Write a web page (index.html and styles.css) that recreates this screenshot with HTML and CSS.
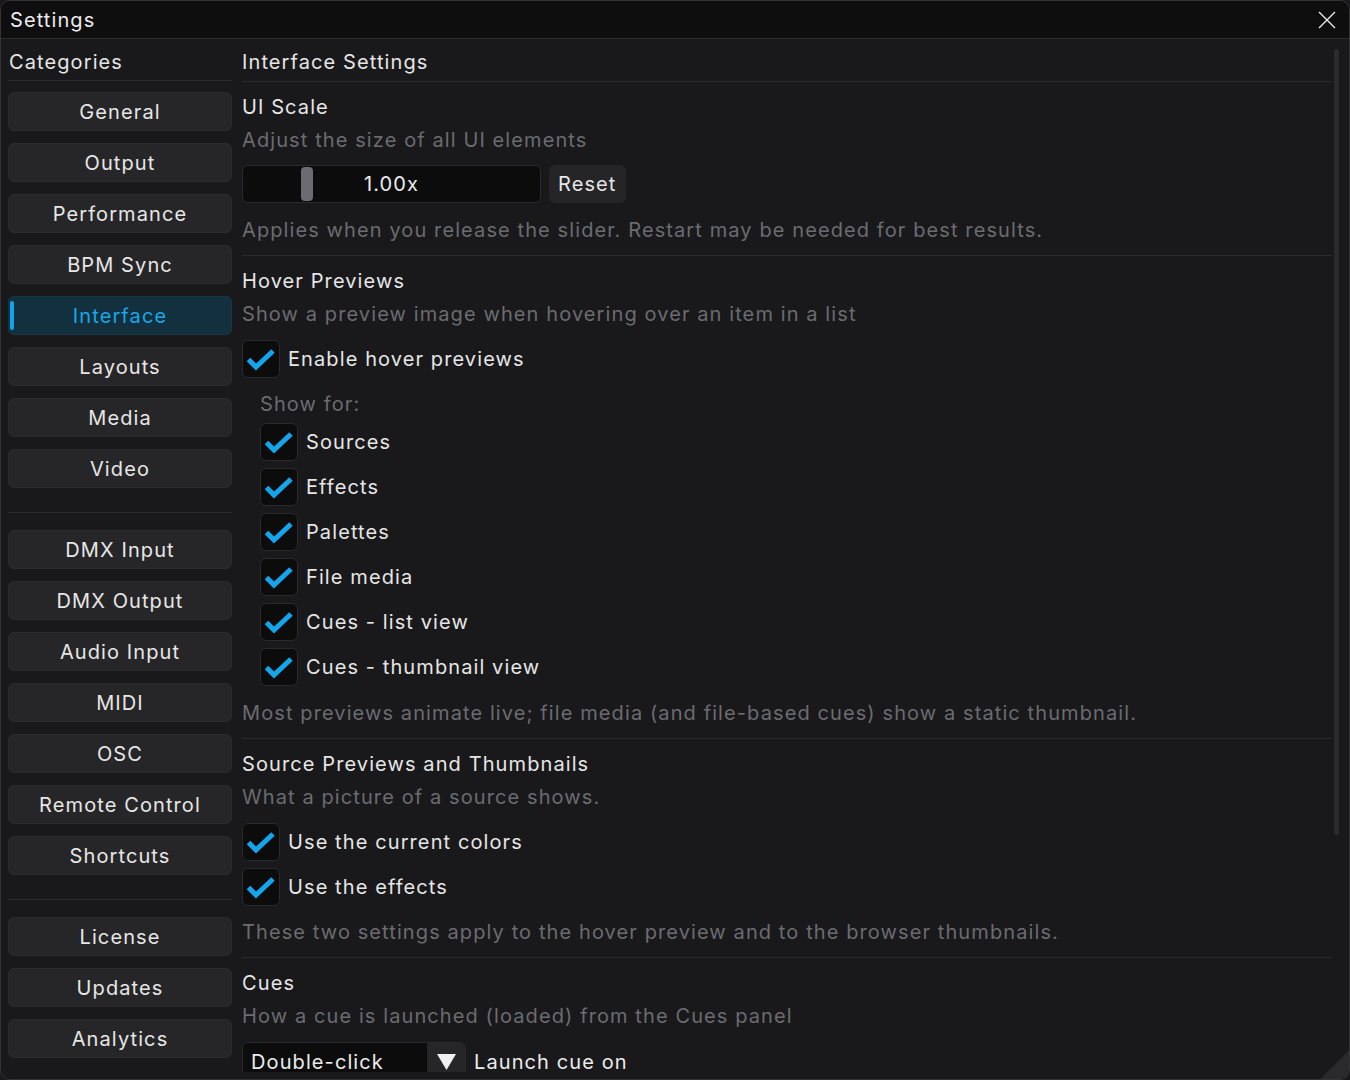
FILE: index.html
```html
<!DOCTYPE html>
<html lang="en">
<head>
    <meta charset="UTF-8">
    <title>Settings</title>
    <link rel="stylesheet" href="styles.css">
</head>
<body>
<div class="window">
    <div class="titlebar">
        <span class="title">Settings</span>
        <svg class="close" width="20" height="20" viewBox="0 0 20 20">
            <path d="M2 2 L18 18 M18 2 L2 18" stroke="#e8e8e8" stroke-width="1.4" fill="none"/>
        </svg>
    </div>
    <div class="main">
        <div class="sidebar">
            <div class="side-head">Categories</div>
            <div class="group">
                <div class="cat">General</div>
                <div class="cat">Output</div>
                <div class="cat">Performance</div>
                <div class="cat">BPM Sync</div>
                <div class="cat active">Interface</div>
                <div class="cat">Layouts</div>
                <div class="cat">Media</div>
                <div class="cat">Video</div>
            </div>
            <div class="group">
                <div class="cat">DMX Input</div>
                <div class="cat">DMX Output</div>
                <div class="cat">Audio Input</div>
                <div class="cat">MIDI</div>
                <div class="cat">OSC</div>
                <div class="cat">Remote Control</div>
                <div class="cat">Shortcuts</div>
            </div>
            <div class="group">
                <div class="cat">License</div>
                <div class="cat">Updates</div>
                <div class="cat">Analytics</div>
            </div>
        </div>

        <div class="content">
            <div class="scroll">
                <div class="page-head">Interface Settings</div>

                <div class="section">
                    <div class="heading">UI Scale</div>
                    <div class="desc">Adjust the size of all UI elements</div>
                    <div class="row slider-row">
                        <div class="slider">
                            <div class="handle" style="left: 58px"></div>
                            <span class="value">1.00x</span>
                        </div>
                        <div class="btn">Reset</div>
                    </div>
                    <div class="desc note">Applies when you release the slider. Restart may be needed for best results.</div>
                </div>

                <div class="section">
                    <div class="heading">Hover Previews</div>
                    <div class="desc">Show a preview image when hovering over an item in a list</div>
                    <div class="check ctl"><span class="box"><svg width="38" height="38" viewBox="0 0 38 38"><polyline points="6.5,19.5 14,27 31,11" fill="none" stroke="#14a6ec" stroke-width="5"/></svg></span>Enable hover previews</div>
                    <div class="desc sub-label">Show for:</div>
                    <div class="subs">
                        <div class="check"><span class="box"><svg width="38" height="38" viewBox="0 0 38 38"><polyline points="6.5,19.5 14,27 31,11" fill="none" stroke="#14a6ec" stroke-width="5"/></svg></span>Sources</div>
                        <div class="check"><span class="box"><svg width="38" height="38" viewBox="0 0 38 38"><polyline points="6.5,19.5 14,27 31,11" fill="none" stroke="#14a6ec" stroke-width="5"/></svg></span>Effects</div>
                        <div class="check"><span class="box"><svg width="38" height="38" viewBox="0 0 38 38"><polyline points="6.5,19.5 14,27 31,11" fill="none" stroke="#14a6ec" stroke-width="5"/></svg></span>Palettes</div>
                        <div class="check"><span class="box"><svg width="38" height="38" viewBox="0 0 38 38"><polyline points="6.5,19.5 14,27 31,11" fill="none" stroke="#14a6ec" stroke-width="5"/></svg></span>File media</div>
                        <div class="check"><span class="box"><svg width="38" height="38" viewBox="0 0 38 38"><polyline points="6.5,19.5 14,27 31,11" fill="none" stroke="#14a6ec" stroke-width="5"/></svg></span>Cues - list view</div>
                        <div class="check"><span class="box"><svg width="38" height="38" viewBox="0 0 38 38"><polyline points="6.5,19.5 14,27 31,11" fill="none" stroke="#14a6ec" stroke-width="5"/></svg></span>Cues - thumbnail view</div>
                    </div>
                    <div class="desc note">Most previews animate live; file media (and file-based cues) show a static thumbnail.</div>
                </div>

                <div class="section">
                    <div class="heading">Source Previews and Thumbnails</div>
                    <div class="desc">What a picture of a source shows.</div>
                    <div class="subs ctl flat">
                        <div class="check"><span class="box"><svg width="38" height="38" viewBox="0 0 38 38"><polyline points="6.5,19.5 14,27 31,11" fill="none" stroke="#14a6ec" stroke-width="5"/></svg></span>Use the current colors</div>
                        <div class="check"><span class="box"><svg width="38" height="38" viewBox="0 0 38 38"><polyline points="6.5,19.5 14,27 31,11" fill="none" stroke="#14a6ec" stroke-width="5"/></svg></span>Use the effects</div>
                    </div>
                    <div class="desc note tight">These two settings apply to the hover preview and to the browser thumbnails.</div>
                </div>

                <div class="section last">
                    <div class="heading">Cues</div>
                    <div class="desc">How a cue is launched (loaded) from the Cues panel</div>
                    <div class="row ctl">
                        <div class="combo">
                            <span class="combo-text">Double-click</span>
                            <span class="combo-arrow"><svg width="19" height="16" viewBox="0 0 19 16"><polygon points="0,0 19,0 9.5,16" fill="#f0f0f0"/></svg></span>
                        </div>
                        <span class="combo-label">Launch cue on</span>
                    </div>
                </div>
            </div>
            <div class="scrollbar"><div class="thumb"></div></div>
        </div>
    </div>
    <div class="grip"></div>
</div>
</body>
</html>
```

FILE: styles.css
```css
html, body {
    margin: 0;
    padding: 0;
    background-color: #19191b;
}
body {
    font-family: Inter, "Noto Sans", sans-serif;
    font-size: 20px;
    letter-spacing: 1.1px;
    color: #e6e6e6;
}
.window {
    position: relative;
    width: 1350px;
    height: 1080px;
    box-sizing: border-box;
    border: 1px solid #333336;
    border-radius: 10px;
    overflow: hidden;
    background-color: #19191b;
    display: flex;
    flex-direction: column;
}
.titlebar {
    height: 37px;
    flex: none;
    background-color: #0e0e0f;
    border-bottom: 1px solid #2c2c2f;
    display: flex;
    align-items: center;
    justify-content: space-between;
    padding: 0 12px 0 9px;
}
.title {
    color: #ececec;
}
.close {
    margin-top: 1px;
}
.main {
    flex: 1;
    display: flex;
    min-height: 0;
    padding: 0 0 7px 7px;
    gap: 10px;
}
.sidebar {
    width: 224px;
    flex: none;
    display: flex;
    flex-direction: column;
}
.side-head {
    line-height: 24px;
    padding: 11px 0 6px 1px;
    border-bottom: 1px solid #2a2a2d;
}
.group {
    display: flex;
    flex-direction: column;
    gap: 12px;
    padding: 11px 0 24px;
    border-bottom: 1px solid #2a2a2d;
}
.group + .group {
    padding-top: 17px;
}
.group:last-child {
    border-bottom: none;
}
.cat {
    position: relative;
    height: 39px;
    box-sizing: border-box;
    border-radius: 6px;
    background-color: #262628;
    border: 1px solid #2b2b2e;
    display: flex;
    align-items: center;
    justify-content: center;
    color: #e6e6e6;
}
.cat.active {
    background-color: #13303e;
    border-color: #173747;
    color: #1aa6e8;
}
.cat.active::before {
    content: "";
    position: absolute;
    left: 1px;
    top: 4px;
    bottom: 4px;
    width: 4px;
    border-radius: 2px;
    background-color: #13a5ec;
}
.content {
    flex: 1;
    display: flex;
    min-width: 0;
    gap: 2px;
}
.scroll {
    flex: 1;
    overflow: hidden;
}
.page-head {
    line-height: 24px;
    padding: 11px 0 7px;
    border-bottom: 1px solid #2a2a2d;
}
.section {
    padding: 13px 0 13px;
    border-bottom: 1px solid #2a2a2d;
}
.section.last {
    border-bottom: none;
}
.heading {
    line-height: 24px;
}
.desc {
    line-height: 24px;
    margin-top: 9px;
    color: #6b6b70;
}
.ctl {
    margin-top: 14px;
}
.slider-row {
    margin-top: 13px;
}
.note {
    margin-top: 15px;
}
.note.tight {
    margin-top: 14px;
}
.row {
    display: flex;
    align-items: center;
    gap: 8px;
}
.slider {
    position: relative;
    width: 299px;
    height: 38px;
    box-sizing: border-box;
    background-color: #0c0c0d;
    border: 1px solid #2a2a2c;
    border-radius: 6px;
    display: flex;
    align-items: center;
    justify-content: center;
}
.handle {
    position: absolute;
    top: 1px;
    bottom: 1px;
    width: 12px;
    border-radius: 4px;
    background-color: #6b6b71;
}
.value {
    color: #ececec;
}
.btn {
    height: 38px;
    box-sizing: border-box;
    padding: 0 9px;
    border-radius: 6px;
    background-color: #252527;
    display: flex;
    align-items: center;
}
.check {
    display: flex;
    align-items: center;
    gap: 8px;
    height: 38px;
}
.box {
    width: 38px;
    height: 38px;
    box-sizing: border-box;
    border: 1px solid #2a2a2c;
    border-radius: 6px;
    background-color: #0c0c0d;
    display: flex;
    align-items: center;
    justify-content: center;
    overflow: hidden;
}
.box svg {
    flex: none;
}
.sub-label {
    margin-top: 14px;
    padding-left: 18px;
}
.subs {
    display: flex;
    flex-direction: column;
    gap: 7px;
    margin-top: 7px;
    padding-left: 18px;
}
.subs.flat {
    padding-left: 0;
    margin-top: 14px;
}
.combo {
    display: flex;
    width: 224px;
    height: 39px;
    box-sizing: border-box;
    border: 1px solid #2a2a2c;
    border-radius: 6px;
    background-color: #0c0c0d;
    overflow: hidden;
}
.combo-text {
    flex: 1;
    display: flex;
    align-items: center;
    padding-left: 8px;
    color: #ececec;
}
.combo-arrow {
    width: 38px;
    background-color: #262628;
    display: flex;
    align-items: center;
    justify-content: center;
}
.combo-label {
    color: #ececec;
}
.scrollbar {
    width: 5px;
    flex: none;
    margin-right: 10px;
    padding-top: 10px;
}
.thumb {
    height: 786px;
    border-radius: 3px;
    background-color: #2b2b2e;
}
.grip {
    position: absolute;
    right: 0;
    bottom: 0;
    width: 28px;
    height: 28px;
    background: linear-gradient(135deg, transparent 50%, #2a2a2c 50%);
}
```
